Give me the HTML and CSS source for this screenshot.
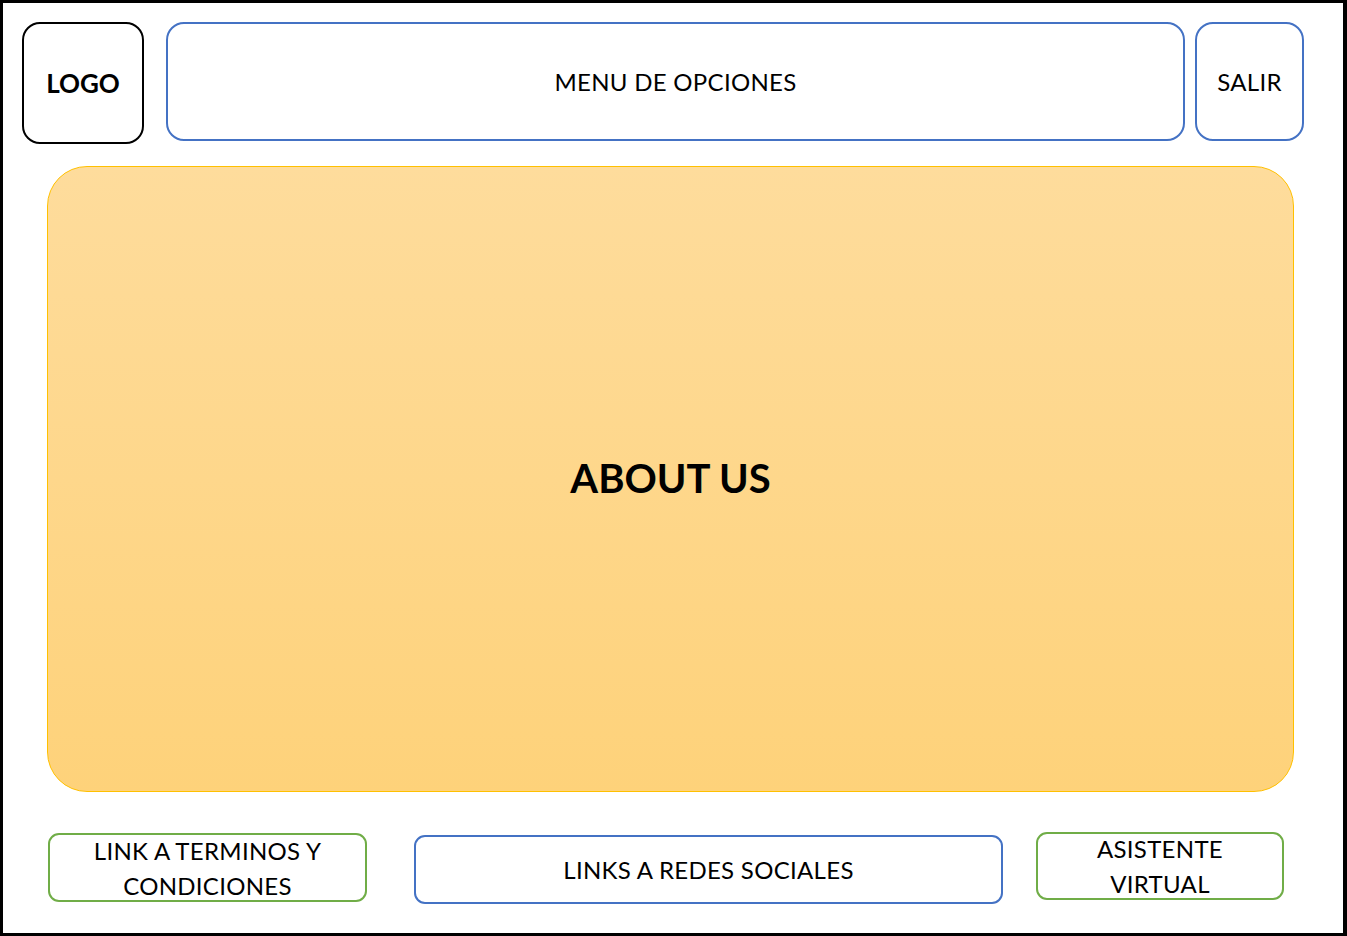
FILE: index.html
```html
<!DOCTYPE html>
<html lang="es">
<head>
<meta charset="utf-8">
<title>Wireframe</title>
<link rel="stylesheet" href="styles.css">
</head>
<body>
<div class="frame">
  <header class="header">
    <div class="box logo">LOGO</div>
    <nav class="box menu">MENU DE OPCIONES</nav>
    <div class="box salir">SALIR</div>
  </header>
  <main class="about">ABOUT US</main>
  <footer class="footer">
    <div class="box terms">LINK A TERMINOS Y<br>CONDICIONES</div>
    <div class="box redes">LINKS A REDES SOCIALES</div>
    <div class="box asistente">ASISTENTE<br>VIRTUAL</div>
  </footer>
</div>
</body>
</html>
```
FILE: styles.css
```css
html, body {
  margin: 0;
  padding: 0;
  background: #ffffff;
}
body {
  font-family: Lato, "Open Sans", sans-serif;
  color: #000;
}
.frame {
  width: 1347px;
  height: 936px;
  box-sizing: border-box;
  border: 3px solid #000;
  border-right-width: 4px;
  padding-top: 19px;
  display: flex;
  flex-direction: column;
}
.box {
  box-sizing: border-box;
  display: flex;
  align-items: center;
  justify-content: center;
  text-align: center;
  background: #fff;
  font-size: 24px;
  letter-spacing: 0.3px;
}
.header {
  display: flex;
  align-items: flex-start;
  margin-left: 19px;
}
.logo {
  width: 122px;
  height: 122px;
  border: 2px solid #000;
  border-radius: 18px;
  font-weight: 700;
  font-size: 26px;
  letter-spacing: 0;
  margin-right: 22px;
}
.menu {
  width: 1019px;
  height: 119px;
  border: 2px solid #4472c4;
  border-radius: 18px;
  margin-right: 10px;
}
.salir {
  width: 109px;
  height: 119px;
  border: 2px solid #4472c4;
  border-radius: 18px;
}
.about {
  box-sizing: border-box;
  margin: 22px 0 0 44px;
  width: 1247px;
  height: 626px;
  border: 1px solid #ffc000;
  border-radius: 40px;
  background: linear-gradient(180deg, #fedc9c 0%, #fed27a 100%);
  display: flex;
  align-items: center;
  justify-content: center;
  font-weight: 700;
  font-size: 40px;
  padding-bottom: 2px;
}
.footer {
  display: flex;
  align-items: flex-start;
  margin-top: 40px;
  margin-left: 45px;
}
.terms {
  width: 319px;
  height: 69px;
  margin-top: 1px;
  border: 2px solid #70ad47;
  border-radius: 11px;
  line-height: 35px;
  margin-right: 47px;
}
.redes {
  width: 589px;
  height: 69px;
  margin-top: 3px;
  border: 2px solid #4472c4;
  border-radius: 11px;
  margin-right: 33px;
}
.asistente {
  width: 248px;
  height: 68px;
  border: 2px solid #70ad47;
  border-radius: 11px;
  line-height: 35px;
}
```
